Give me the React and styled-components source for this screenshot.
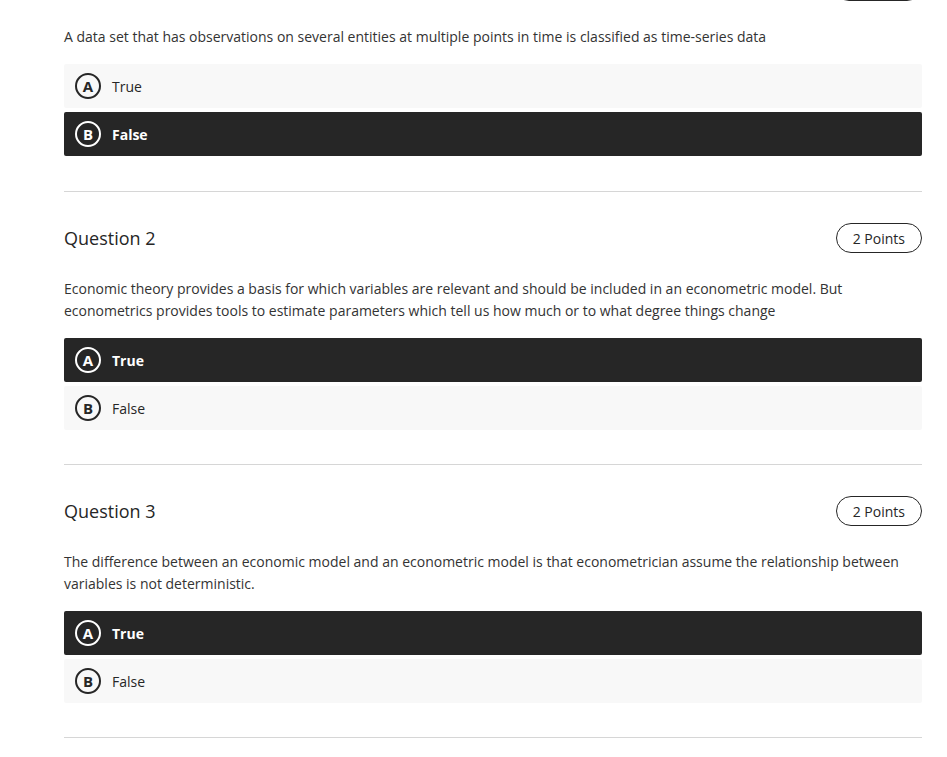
import React from "react";
import styled, { createGlobalStyle } from "styled-components";

const Global = createGlobalStyle`
  html, body { margin: 0; padding: 0; background: #fff; }
  body { font-family: "Open Sans", "Noto Sans", sans-serif; color: #262626; }
`;

const Page = styled.div`
  width: 858px;
  padding-left: 64px;
  overflow: hidden;
  height: 757px;
`;

const TopStub = styled.div`
  display: flex;
  justify-content: flex-end;
  height: 0;
  overflow: visible;
`;

const Pill = styled.span`
  display: inline-flex;
  align-items: center;
  justify-content: center;
  box-sizing: border-box;
  height: 30px;
  padding: 0 16px;
  border: 1px solid #262626;
  border-radius: 15px;
  font-size: 14px;
  color: #262626;
  background: #fff;
  white-space: nowrap;
`;

const StubPill = styled(Pill)`
  margin-top: -29px;
  width: 88px;
`;

const Block = styled.section`
  padding-top: ${(p) => (p.$first ? 26 : 31)}px;
  padding-bottom: ${(p) => (p.$first ? 35 : 34)}px;
  border-bottom: 1px solid #d6d6d6;
`;

const Header = styled.div`
  display: flex;
  align-items: center;
  justify-content: space-between;
  height: 30px;
  margin-bottom: 25px;
`;

const Title = styled.h2`
  margin: 0;
  font-size: 18px;
  font-weight: 400;
  color: #262626;
`;

const Prompt = styled.p`
  margin: 0 0 16px;
  font-size: 14px;
  line-height: 22px;
  color: #333;
`;

const Options = styled.div`
  display: flex;
  flex-direction: column;
  gap: 4px;
`;

const Option = styled.div`
  display: flex;
  align-items: center;
  height: 44px;
  padding-left: 11px;
  border-radius: 2px;
  background: ${(p) => (p.$selected ? "#262626" : "#f8f8f8")};
  color: ${(p) => (p.$selected ? "#fff" : "#262626")};
  font-size: 14px;
  font-weight: ${(p) => (p.$selected ? 700 : 400)};
`;

const Badge = styled.span`
  box-sizing: border-box;
  flex: 0 0 26px;
  width: 26px;
  height: 26px;
  border-radius: 50%;
  border: 2px solid currentColor;
  display: flex;
  align-items: center;
  justify-content: center;
  font-size: 15px;
  font-weight: 700;
  margin-right: 11px;
  line-height: 1;
`;

const questions = [
  {
    title: null,
    text: "A data set that has observations on several entities at multiple points in time is classified as time-series data",
    selected: 1,
  },
  {
    title: "Question 2",
    text: "Economic theory provides a basis for which variables are relevant and should be included in an econometric model. But econometrics provides tools to estimate parameters which tell us how much or to what degree things change",
    selected: 0,
  },
  {
    title: "Question 3",
    text: "The difference between an economic model and an econometric model is that econometrician assume the relationship between variables is not deterministic.",
    selected: 0,
  },
];

const labels = ["True", "False"];

export default function App() {
  return (
    <>
      <Global />
      <Page>
        <TopStub>
          <StubPill aria-hidden="true" />
        </TopStub>
        {questions.map((q, i) => (
          <Block key={i} $first={!q.title}>
            {q.title && (
              <Header>
                <Title>{q.title}</Title>
                <Pill>2 Points</Pill>
              </Header>
            )}
            <Prompt>{q.text}</Prompt>
            <Options>
              {labels.map((l, j) => (
                <Option key={l} $selected={q.selected === j}>
                  <Badge>{j === 0 ? "A" : "B"}</Badge>
                  {l}
                </Option>
              ))}
            </Options>
          </Block>
        ))}
      </Page>
    </>
  );
}
